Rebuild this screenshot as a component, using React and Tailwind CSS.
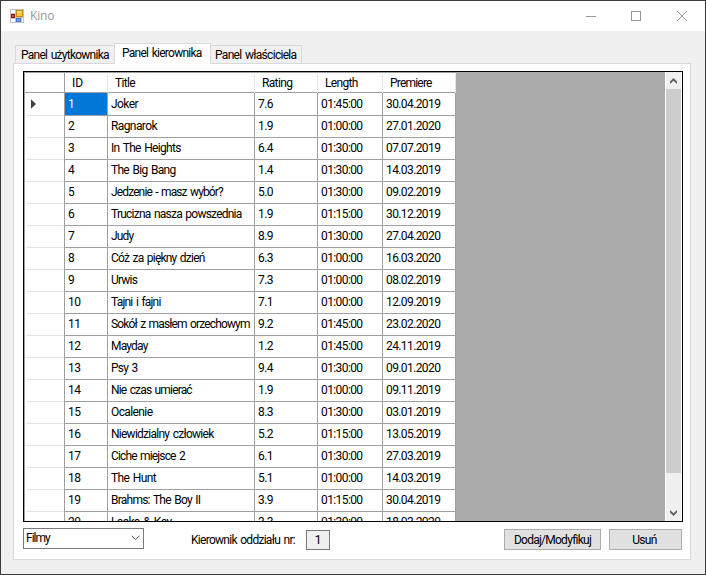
const films = [
  ['1', 'Joker', '7.6', '01:45:00', '30.04.2019', 'tracking-[-0.6px]'],
  ['2', 'Ragnarok', '1.9', '01:00:00', '27.01.2020', 'tracking-[-0.6px]'],
  ['3', 'In The Heights', '6.4', '01:30:00', '07.07.2019', 'tracking-[-0.7px]'],
  ['4', 'The Big Bang', '1.4', '01:30:00', '14.03.2019', 'tracking-[-0.7px]'],
  ['5', 'Jedzenie - masz wybór?', '5.0', '01:30:00', '09.02.2019', 'tracking-[-0.87px]'],
  ['6', 'Trucizna nasza powszednia', '1.9', '01:15:00', '30.12.2019', 'tracking-[-0.77px]'],
  ['7', 'Judy', '8.9', '01:30:00', '27.04.2020', 'tracking-[-0.85px]'],
  ['8', 'Cóż za piękny dzień', '6.3', '01:00:00', '16.03.2020', 'tracking-[-0.79px]'],
  ['9', 'Urwis', '7.3', '01:00:00', '08.02.2019', 'tracking-[-0.8px]'],
  ['10', 'Tajni i fajni', '7.1', '01:00:00', '12.09.2019', 'tracking-[-0.79px]'],
  ['11', 'Sokół z masłem orzechowym', '9.2', '01:45:00', '23.02.2020', 'tracking-[-0.86px]'],
  ['12', 'Mayday', '1.2', '01:45:00', '24.11.2019', 'tracking-[-0.8px]'],
  ['13', 'Psy 3', '9.4', '01:30:00', '09.01.2020', 'tracking-[-0.8px]'],
  ['14', 'Nie czas umierać', '1.9', '01:00:00', '09.11.2019', 'tracking-[-0.84px]'],
  ['15', 'Ocalenie', '8.3', '01:30:00', '03.01.2019', 'tracking-[-0.6px]'],
  ['16', 'Niewidzialny człowiek', '5.2', '01:15:00', '13.05.2019', 'tracking-[-0.74px]'],
  ['17', 'Ciche miejsce 2', '6.1', '01:30:00', '27.03.2019', 'tracking-[-0.85px]'],
  ['18', 'The Hunt', '5.1', '01:00:00', '14.03.2019', 'tracking-[-0.63px]'],
  ['19', 'Brahms: The Boy II', '3.9', '01:15:00', '30.04.2019', 'tracking-[-0.76px]'],
  ['20', 'Laska & Kay', '3.3', '01:30:00', '18.03.2020', 'tracking-[-0.6px]'],
];

const gridCols = 'grid grid-cols-[40px_43px_147px_63px_65px_73px]';

function FormIcon() {
  return (
    <svg width="14" height="14" viewBox="0 0 14 14" shapeRendering="crispEdges">
      <path fill="#c3c3c3" d="M0 0h14v14H0z" />
      <path fill="#fff" d="M1 1h4v3H1zM1 10h4v3H1zM12 9h1v4h-1z" />
      <path fill="#8c1a10" d="M1 5h4v4H1z" />
      <path fill="#d9493a" d="M2 6h2v2H2z" />
      <path fill="#c88a08" d="M6 1h7v7H6z" />
      <path fill="#fccb38" d="M7 2h5v5H7z" />
      <path fill="#ffe48a" d="M7 2h4v2H7z" />
      <path fill="#3f77cf" d="M6 9h5v4H6z" />
      <path fill="#72a4ee" d="M7 10h3v2H7z" />
    </svg>
  );
}

function TitleBar() {
  return (
    <header className="flex h-[30px] shrink-0 items-center bg-white pl-[9px]">
      <FormIcon />
      <span className="ml-[6px] flex-1 font-['Open_Sans',sans-serif] text-[12px] tracking-[-0.2px] text-[#999]">Kino</span>
      <svg width="120" height="12" viewBox="0 0 120 12" fill="none" stroke="#999" className="mr-[11px]">
        <path d="M12 6.5h10" shapeRendering="crispEdges" />
        <path d="M57.5 1.5h9v9h-9z" shapeRendering="crispEdges" />
        <path d="M103 1l10 10M113 1L103 11" />
      </svg>
    </header>
  );
}

function Tabs() {
  return (
    <nav className="flex h-5 items-end pl-[2px] tracking-[-0.74px] whitespace-nowrap">
      <div className="flex h-[18px] w-[99px] items-center border border-r-0 border-b-0 border-[#d9d9d9] bg-[#f0f0f0] pt-px pl-[5px]">
        Panel użytkownika
      </div>
      <div className="relative -mb-px flex h-[21px] w-[97px] items-center border border-b-0 border-[#d9d9d9] bg-white pb-[2px] pl-[7px]">
        Panel kierownika
      </div>
      <div className="flex h-[18px] w-[91px] items-center border border-b-0 border-l-0 border-[#d9d9d9] bg-[#f0f0f0] pt-px pl-1 tracking-[-0.7px]">
        Panel właściciela
      </div>
    </nav>
  );
}

function HeaderRow() {
  const cell = 'mt-px border-r border-[#e5e5e5] pl-[7px]';
  return (
    <div className={`${gridCols} h-5 border-b border-[#a0a0a0] leading-[19px] tracking-[-0.65px]`}>
      <div className="border-r border-[#a0a0a0]" />
      <div className={`${cell} tracking-[0px]`}>ID</div>
      <div className={cell}>Title</div>
      <div className={cell}>Rating</div>
      <div className={cell}>Length</div>
      <div className={`${cell} tracking-[-0.8px]`}>Premiere</div>
    </div>
  );
}

function FilmRow({ film, selected }) {
  const cell = 'border-r border-b border-[#a0a0a0] pl-[3px] whitespace-nowrap';
  return (
    <div className={`${gridCols} h-[22px] shrink-0 leading-[22px]`}>
      <div className="flex border-r border-[#a0a0a0] pl-px">
        <div className="flex flex-1 items-center border-b border-[#e3e3e3] pl-[5px]">
          {selected && (
            <svg width="5" height="10" viewBox="0 0 5 10">
              <path d="M0 0.3L5 5L0 9.7z" fill="#404040" />
            </svg>
          )}
        </div>
      </div>
      <div className={selected ? `${cell} bg-[#0078d7] text-white` : cell}>
        <span className="tracking-[-0.6px]">{film[0]}</span>
      </div>
      <div className={`${cell} ${film[5]}`}>{film[1]}</div>
      <div className={`${cell} tracking-[-0.6px]`}>{film[2]}</div>
      <div className={`${cell} tracking-[-0.6px]`}>{film[3]}</div>
      <div className={`${cell} tracking-[-0.6px]`}>{film[4]}</div>
    </div>
  );
}

function ScrollBar() {
  return (
    <div className="flex w-[17px] flex-col border-x border-white bg-[#f0f0f0]">
      <div className="flex h-[17px] items-center justify-center pt-px">
        <svg width="7" height="6" viewBox="0 0 7 6">
          <path d="M3.5 0L7 3.5V6L3.5 2.7L0 6V3.5z" fill="#606060" />
        </svg>
      </div>
      <div className="h-[384px] bg-[#cdcdcd]" />
      <div className="flex-1" />
      <div className="flex h-[17px] items-center justify-center">
        <svg width="7" height="6" viewBox="0 0 7 6">
          <path d="M3.5 6L7 2.5V0L3.5 3.3L0 0V2.5z" fill="#606060" />
        </svg>
      </div>
    </div>
  );
}

function FilmGrid() {
  return (
    <div className="flex h-[451px] w-[660px] overflow-hidden border border-black bg-[#ababab]">
      <div className="flex w-[432px] flex-col border-t border-l border-[#a0a0a0] bg-white">
        <HeaderRow />
        {films.map((film, i) => (
          <FilmRow key={film[0]} film={film} selected={i === 0} />
        ))}
      </div>
      <div className="flex-1" />
      <ScrollBar />
    </div>
  );
}

function Footer() {
  return (
    <div className="mt-[6px] flex items-start">
      <div className="flex h-[21px] w-[121px] items-center justify-between border border-[#7a7a7a] pr-[3px] pb-px pl-[2px]">
        <span className="tracking-[-1px]">Filmy</span>
        <svg width="9" height="6" viewBox="0 0 9 6" fill="none" stroke="#505050">
          <path d="M0.5 0.7L4.5 4.7L8.5 0.7" />
        </svg>
      </div>
      <span className="mt-[2px] ml-[47px] w-[115px] leading-5 tracking-[-0.72px] whitespace-nowrap">Kierownik oddziału nr:</span>
      <div className="mt-[2px] flex h-5 w-6 items-center justify-center border border-[#7a7a7a] bg-[#f0f0f0]">1</div>
      <button className="mt-px ml-[174px] h-[21px] w-[97px] border border-[#adadad] bg-[#e1e1e1] leading-[20px] tracking-[-0.75px]">
        Dodaj/Modyfikuj
      </button>
      <button className="mt-px ml-[8px] h-[21px] w-[73px] border border-[#adadad] bg-[#e1e1e1] pr-[2px] leading-[20px] tracking-[-0.7px]">Usuń</button>
    </div>
  );
}

export default function App() {
  return (
    <div className="flex h-[575px] w-[706px] flex-col overflow-hidden border border-[#3c3a3c] bg-[#f0f0f0] font-['Roboto','Liberation_Sans',sans-serif] text-[12px] leading-[18px] [word-spacing:1.2px] text-black">
      <TitleBar />
      <main className="mt-[12px] ml-[12px] w-[678px]">
        <Tabs />
        <section className="h-[497px] border border-[#d9d9d9] bg-white pt-[7px] pl-[9px]">
          <FilmGrid />
          <Footer />
        </section>
      </main>
    </div>
  );
}
